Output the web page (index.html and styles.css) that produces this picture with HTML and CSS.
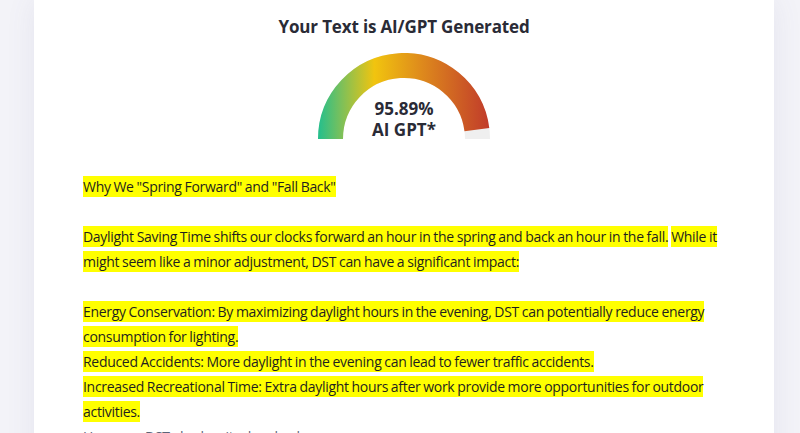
FILE: index.html
```html
<!DOCTYPE html>
<html lang="en">
<head>
<meta charset="utf-8">
<title>AI Detection Result</title>
<link rel="stylesheet" href="styles.css">
</head>
<body>
<main class="card">
  <h1 class="title">Your Text is AI/GPT Generated</h1>
  <div class="gauge">
    <svg class="gauge-svg" width="174" height="87" viewBox="0 0 174 87" aria-hidden="true">
      <defs>
        <linearGradient id="g" gradientUnits="userSpaceOnUse" x1="0" y1="0" x2="174" y2="0">
          <stop offset="0" stop-color="#1fbf90"/>
          <stop offset="0.14" stop-color="#7cc05a"/>
          <stop offset="0.33" stop-color="#f1c40f"/>
          <stop offset="0.6" stop-color="#de8a1c"/>
          <stop offset="1" stop-color="#c0392b"/>
        </linearGradient>
      </defs>
      <path d="M 13.5 86 A 73.5 73.5 0 0 1 160.5 86" fill="none" stroke="#efefef" stroke-width="25"/>
      <path d="M 13.5 86 A 73.5 73.5 0 0 1 159.89 76.53" fill="none" stroke="url(#g)" stroke-width="25"/>
    </svg>
    <div class="gauge-label">
      <span class="pct">95.89%</span>
      <span class="kind">AI GPT*</span>
    </div>
  </div>
  <p class="result">
    <mark>Why We "Spring Forward" and "Fall Back"</mark><br><br>
    <mark>Daylight Saving Time shifts our clocks forward an hour in the spring and back an hour in the fall.</mark> <mark>While it might seem like a minor adjustment, DST can have a significant impact:</mark><br><br>
    <mark>Energy Conservation: By maximizing daylight hours in the evening, DST can potentially reduce energy consumption for lighting.</mark><br>
    <mark>Reduced Accidents: More daylight in the evening can lead to fewer traffic accidents.</mark><br>
    <mark>Increased Recreational Time: Extra daylight hours after work provide more opportunities for outdoor activities.</mark><br>
    <span class="plain">However, DST also has its drawbacks:</span>
  </p>
</main>
</body>
</html>
```
FILE: styles.css
```css
html, body {
  margin: 0;
  padding: 0;
}
body {
  background: #f3f3f8;
  font-family: "Open Sans", "Noto Sans", sans-serif;
  overflow: hidden;
  height: 433px;
}
.card {
  margin: 0 26px 0 34px;
  background: #ffffff;
  box-shadow: 0 0 28px rgba(90, 90, 140, 0.09);
  padding: 14px 49px 40px;
  min-height: 600px;
  box-sizing: border-box;
}
.title {
  margin: 0;
  text-align: center;
  font-size: 17px;
  font-weight: 700;
  letter-spacing: -0.15px;
  color: #2a2b36;
  line-height: 26px;
}
.gauge {
  position: relative;
  width: 174px;
  height: 87px;
  margin: 13px auto 0;
}
.gauge-svg {
  display: block;
}
.gauge-label {
  position: absolute;
  left: 0;
  right: 0;
  bottom: 0;
  display: flex;
  flex-direction: column;
  align-items: center;
  color: #2a2b36;
  font-weight: 700;
  font-size: 17px;
  line-height: 21px;
}
.result {
  margin: 34px 0 0;
  font-size: 14px;
  letter-spacing: -0.3px;
  word-spacing: -0.5px;
  line-height: 25px;
  color: #1f1f1f;
}
mark {
  background: #ffff00;
  color: #1f1f1f;
  padding: 1px 0;
}
.plain {
  color: #5b6478;
}
```
